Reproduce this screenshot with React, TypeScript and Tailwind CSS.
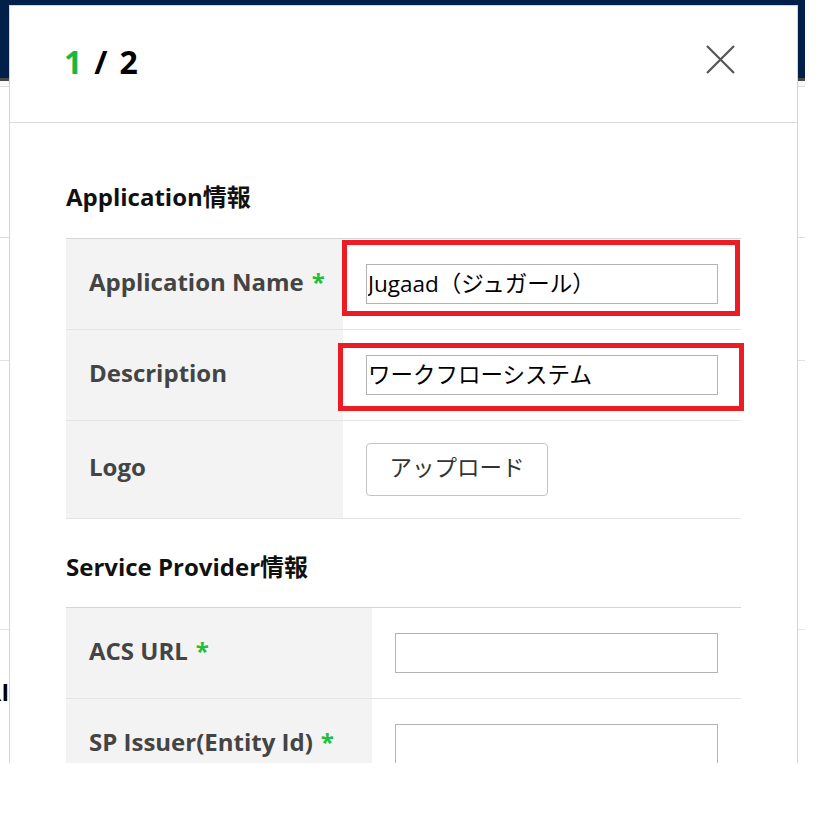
import React from 'react';

const font = "font-['Open_Sans','Noto_Sans_CJK_JP',sans-serif]";

function Required() {
  return <span className="ml-[8px] text-[#1fbf3a]">*</span>;
}

function Highlight({ className }: { className: string }) {
  return <div className={`pointer-events-none absolute border-[5px] border-[#ec1c24] ${className}`} />;
}

function TextInput({ value }: { value?: string }) {
  return (
    <input
      type="text"
      defaultValue={value}
      className="h-[40px] w-full border border-[#b3b3b3] bg-white pb-[3px] pl-[1px] text-[22.5px] text-black outline-none"
    />
  );
}

function Row({
  label,
  required,
  labelWidth,
  height,
  children,
}: {
  label: string;
  required?: boolean;
  labelWidth: string;
  height: string;
  children: React.ReactNode;
}) {
  return (
    <div className={`flex border-b border-[#e4e4e4] ${height}`}>
      <div className={`flex shrink-0 items-center bg-[#f3f3f3] pb-[5px] pl-[23px] text-[24px] font-bold text-[#444] ${labelWidth}`}>
        {label}
        {required && <Required />}
      </div>
      <div className="relative flex flex-1 items-center px-[23px]">{children}</div>
    </div>
  );
}

function Background() {
  return (
    <div className="h-[763px] w-[805px] overflow-hidden bg-white">
      <div className="h-[78px] bg-[#00204a]" />
      <div className="h-[3px] bg-[#484848]" />
      <div className="h-[6px] border-b border-[#dedede] bg-[#f8f8f8]" />
      <div className="h-[151px] border-b border-[#dcdcdc]" />
      <div className="h-[123px] border-b border-[#e2e2e2]" />
      <div className="h-[269px] border-b border-[#e6e6e6]" />
      <div className="mt-[32px] flex h-[60px] w-[9px] items-center justify-end overflow-hidden">
        <span className={`${font} whitespace-nowrap text-[23px] font-bold text-black`}>URI</span>
      </div>
    </div>
  );
}

export default function App() {
  return (
    <div className={`relative h-[838px] w-[818px] overflow-hidden bg-white ${font}`}>
      <Background />

      <div className="absolute left-[9px] top-[5px] h-[758px] w-[789px] overflow-hidden border-x border-t border-[#d4d4d4] bg-white">
        <header className="flex h-[117px] items-center justify-between border-b border-[#dcdcdc] pl-[54px] pr-[61px]">
          <h1 className="flex items-baseline gap-[12px] pb-[5px] text-[32px] font-bold leading-none text-black">
            <span className="text-[#17b83d]">1</span>
            <span>/</span>
            <span>2</span>
          </h1>
          <svg width="31" height="31" viewBox="0 0 31 31" className="mt-[-9px]">
            <path d="M2 2 L29 29 M29 2 L2 29" stroke="#555" strokeWidth="2.2" fill="none" />
          </svg>
        </header>

        <div className="px-[56px] pt-[56px]">
          <h2 className="mb-[23px] text-[24px] font-bold leading-[36px] text-[#111]">Application情報</h2>
          <div className="border-t border-[#d6d6d6]">
            <Row label="Application Name" required labelWidth="w-[277px]" height="h-[91px]">
              <TextInput value="Jugaad（ジュガール）" />
              <Highlight className="left-[-1px] right-[1px] top-[1px] h-[76px]" />
            </Row>
            <Row label="Description" labelWidth="w-[277px]" height="h-[91px]">
              <TextInput value="ワークフローシステム" />
              <Highlight className="left-[-5px] right-[-3px] top-[13px] h-[68px]" />
            </Row>
            <Row label="Logo" labelWidth="w-[277px]" height="h-[98px]">
              <button className="h-[53px] w-[182px] rounded-[4px] border border-[#c4c4c4] bg-white pb-[4px] text-[22.5px] text-[#333]">
                アップロード
              </button>
            </Row>
          </div>

          <h2 className="mb-[22px] mt-[30px] text-[24px] font-bold leading-[36px] text-[#111]">Service Provider情報</h2>
          <div className="border-t border-[#d6d6d6]">
            <Row label="ACS URL" required labelWidth="w-[306px]" height="h-[91px]">
              <TextInput />
            </Row>
            <Row label="SP Issuer(Entity Id)" required labelWidth="w-[306px]" height="h-[91px]">
              <TextInput />
            </Row>
          </div>
        </div>
      </div>
    </div>
  );
}
